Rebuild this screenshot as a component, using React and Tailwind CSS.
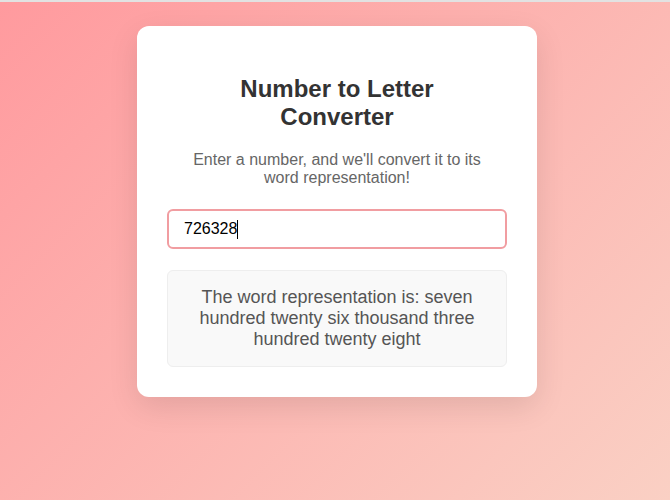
import { useState } from 'react';

const ones = ['', 'one', 'two', 'three', 'four', 'five', 'six', 'seven', 'eight', 'nine', 'ten', 'eleven', 'twelve', 'thirteen', 'fourteen', 'fifteen', 'sixteen', 'seventeen', 'eighteen', 'nineteen'];
const tens = ['', '', 'twenty', 'thirty', 'forty', 'fifty', 'sixty', 'seventy', 'eighty', 'ninety'];

function chunk(n) {
  const words = [];
  if (n >= 100) {
    words.push(ones[Math.floor(n / 100)], 'hundred');
    n %= 100;
  }
  if (n >= 20) {
    words.push(tens[Math.floor(n / 10)]);
    n %= 10;
  }
  if (n > 0) words.push(ones[n]);
  return words.join(' ');
}

function toWords(value) {
  const n = parseInt(value, 10);
  if (Number.isNaN(n)) return '';
  if (n === 0) return 'zero';
  const scales = ['', 'thousand', 'million', 'billion'];
  const parts = [];
  let rest = n;
  let i = 0;
  while (rest > 0 && i < scales.length) {
    const c = rest % 1000;
    if (c) parts.unshift(chunk(c) + (scales[i] ? ' ' + scales[i] : ''));
    rest = Math.floor(rest / 1000);
    i++;
  }
  return parts.join(' ');
}

export default function App() {
  const [value, setValue] = useState('726328');

  return (
    <div className="min-h-screen font-['Liberation_Sans',Arial,sans-serif]">
      <div className="h-[2px] bg-[#e2e2e2]" />
      <div className="min-h-[498px] bg-[linear-gradient(135deg,#ff9a9e_0%,#fad0c4_100%)] pt-6 pl-1">
        <div className="mx-auto w-[400px] rounded-xl bg-white px-[30px] pt-[49px] pb-[30px] shadow-[0_10px_30px_rgba(0,0,0,0.1)]">
          <div className="mx-auto w-[300px] text-center">
            <h1 className="text-[24px] leading-[28px] font-bold text-[#333]">Number to Letter Converter</h1>
            <p className="mt-5 text-[16px] leading-[18px] text-[#666]">
              Enter a number, and we'll convert it to its word representation!
            </p>
          </div>
          <div className="relative mt-[22px]">
            <input
              type="text"
              value={value}
              onChange={(e) => setValue(e.target.value)}
              className="block h-10 w-full rounded-md border-2 border-[#f19da1] px-[15px] text-[16px] text-black caret-transparent outline-none"
            />
            <span className="pointer-events-none absolute left-[70px] top-[11px] h-[19px] w-px bg-black" />
          </div>
          <div className="mt-[21px] rounded-md border border-[#eeeeee] bg-[#f9f9f9] px-5 py-4 text-center text-[18px] leading-[21px] text-[#555]">
            The word representation is: {toWords(value)}
          </div>
        </div>
      </div>
    </div>
  );
}
